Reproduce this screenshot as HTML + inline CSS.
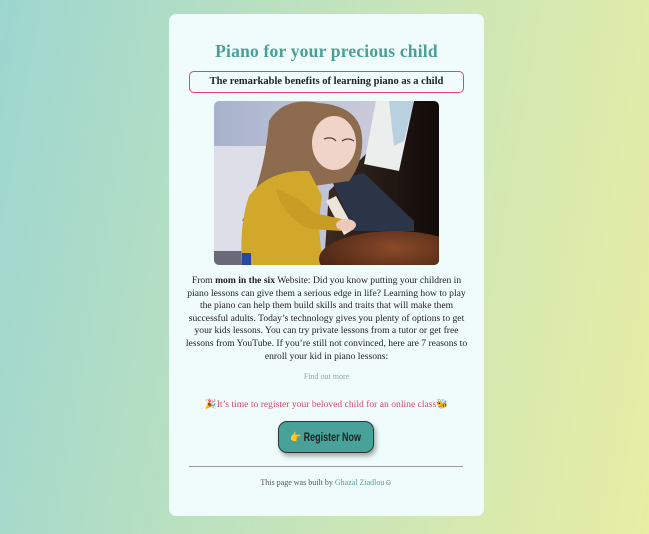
<!DOCTYPE html>
<html><head><meta charset="utf-8"><style>
*{margin:0;padding:0;box-sizing:border-box}
html,body{width:649px;height:534px;overflow:hidden}
body{background:linear-gradient(100deg,#9dd6d0 0%,#c4e4bb 50%,#e8eea4 100%);font-family:"Liberation Serif",serif;position:relative}
.card{position:absolute;left:169px;top:14px;width:315px;height:502px;background:#effcfb;border-radius:7px;text-align:center}
h1{position:absolute;top:27px;left:0;right:0;font-size:17.5px;color:#4a9f98;font-weight:bold;letter-spacing:.2px}
.sub{position:absolute;left:20px;top:57px;width:275px;height:22px;border:1.5px solid #e0446b;border-radius:5px;font-size:10.5px;font-weight:bold;color:#222;line-height:19px}
.img{position:absolute;left:45px;top:87px;width:225px;height:164px;border-radius:5px;overflow:hidden}
.txt{position:absolute;left:16px;top:261px;width:283px;font-size:9.6px;line-height:12.6px;color:#222}
.find{position:absolute;top:358px;left:0;right:0;font-size:8px;color:#8aa8a4}
.pink{position:absolute;top:385px;left:0;right:0;font-size:9.6px;color:#e0446b}
.btn{position:absolute;left:109px;top:407px;width:96px;height:32px;background:#47a29a;border:1.5px solid #333;border-radius:9px;box-shadow:2px 3px 5px rgba(0,0,0,.35);line-height:29px;white-space:nowrap}
.btn span{display:inline-block;transform:scaleX(.78);font-family:"Liberation Sans",sans-serif;font-weight:bold;font-size:11.5px;color:#222;margin-left:-12px;margin-right:-12px}
hr{position:absolute;left:20px;top:452px;width:274px;border:0;border-top:1.5px solid #999}
.foot{position:absolute;top:464px;left:0;right:0;font-size:8px;color:#555}
.foot span{color:#5a9e98}
</style></head><body>
<div class="card">
<h1>Piano for your precious child</h1>
<div class="sub">The remarkable benefits of learning piano as a child</div>
<div class="img"><svg width="225" height="164" viewBox="0 0 225 164">
<defs><linearGradient id="bg" x1="0" x2="1"><stop offset="0" stop-color="#a7b2cc"/><stop offset=".6" stop-color="#c6c8da"/><stop offset="1" stop-color="#cfcfe0"/></linearGradient>
<linearGradient id="pn" x1="0" x2="1"><stop offset="0" stop-color="#3a2a22"/><stop offset="1" stop-color="#100a08"/></linearGradient>
<radialGradient id="wd" cx=".5" cy=".3" r=".7"><stop offset="0" stop-color="#8a4a28"/><stop offset="1" stop-color="#3a1c10"/></radialGradient></defs>
<rect width="225" height="164" fill="url(#bg)"/>
<rect x="0" y="45" width="58" height="105" fill="#dedee8"/>
<rect x="0" y="150" width="40" height="14" fill="#6a6a78"/>
<polygon points="150,55 200,0 225,0 225,164 110,164 115,90" fill="url(#pn)"/>
<polygon points="150,63 162,0 200,0 185,70" fill="#eceeee"/>
<polygon points="175,0 200,0 190,40 180,45" fill="#b8d0e0"/>
<polygon points="118,80 150,72 200,120 200,130 140,130" fill="#2c3448"/>
<polygon points="112,100 122,95 140,128 130,134" fill="#ebe6d8"/>
<path d="M55 20 Q70 -5 105 2 Q145 5 148 35 Q150 60 135 80 L100 85 L60 120 L28 120 Q50 80 55 20Z" fill="#8c6b4e"/>
<ellipse cx="120" cy="42" rx="22" ry="27" fill="#f1d4c8"/>
<path d="M110 38 Q118 35 122 40 M128 40 Q134 36 140 40" stroke="#5a3a30" stroke-width="1.2" fill="none"/>
<path d="M35 95 Q55 68 95 70 L108 95 Q102 130 110 164 L28 164 Q25 125 35 95Z" fill="#d2a82a"/>
<path d="M62 88 Q85 95 100 112 L128 118 L128 130 L95 128 Q68 115 62 88Z" fill="#c99d24"/>
<ellipse cx="132" cy="124" rx="10" ry="6" fill="#efc8bc"/>
<ellipse cx="180" cy="158" rx="75" ry="28" fill="url(#wd)"/>
<rect x="28" y="152" width="9" height="12" fill="#2848a0"/>
</svg></div>
<div class="txt">From <b>mom in the six</b> Website: Did you know putting your children in piano lessons can give them a serious edge in life? Learning how to play the piano can help them build skills and traits that will make them successful adults. Today’s technology gives you plenty of options to get your kids lessons. You can try private lessons from a tutor or get free lessons from YouTube. If you’re still not convinced, here are 7 reasons to enroll your kid in piano lessons:</div>
<div class="find">Find out more</div>
<div class="pink">🎉It’s time to register your beloved child for an online class🐝</div>
<div class="btn"><span>👉 Register Now</span></div>
<hr>
<div class="foot">This page was built by <span>Ghazal Ziadlou</span>☺</div>
</div>
</body></html>
